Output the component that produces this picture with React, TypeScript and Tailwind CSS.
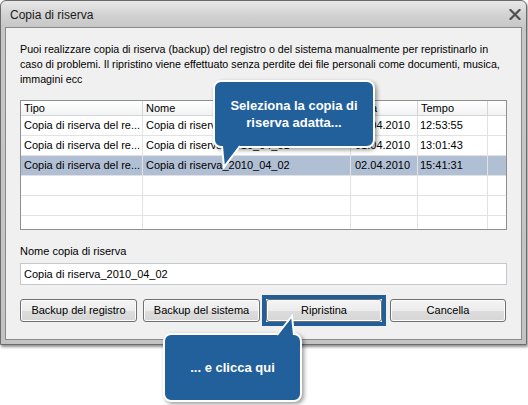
import React from "react";

const rows = [
  { tipo: "Copia di riserva del re...", nome: "Copia di riserva_2010_04_01", data: "01.04.2010", tempo: "12:53:55", sel: false },
  { tipo: "Copia di riserva del re...", nome: "Copia di riserva_2010_04_01", data: "01.04.2010", tempo: "13:01:43", sel: false },
  { tipo: "Copia di riserva del re...", nome: "Copia di riserva_2010_04_02", data: "02.04.2010", tempo: "15:41:31", sel: true },
  { tipo: "", nome: "", data: "", tempo: "", sel: false },
  { tipo: "", nome: "", data: "", tempo: "", sel: false },
  { tipo: "", nome: "", data: "", tempo: "", sel: false },
];

function Btn({ label, w }: { label: string; w: string }) {
  return (
    <div
      className={`${w} h-[23px] flex items-center justify-center rounded-[3px] border border-[#707070] bg-[linear-gradient(to_bottom,#f4f4f4_0%,#ececec_50%,#dddddd_51%,#d6d6d6_100%)] text-[11px] text-black shadow-[inset_0_0_0_1px_#fcfcfc]`}
    >
      {label}
    </div>
  );
}

export default function App() {
  return (
    <div className="relative w-[528px] h-[405px] bg-white overflow-hidden font-['Liberation_Sans',Arial,sans-serif] text-black">
      {/* Window */}
      <div className="w-[527px] h-[345px] flex flex-col rounded-t-[6px] border border-[#6b6b6b] bg-[linear-gradient(to_bottom,#e8e8e8_0px,#d2d2d2_14px,#c7c7c7_26px,#c3c3c3_100%)] shadow-[1px_2px_3px_rgba(0,0,0,0.45)]">
        {/* Title bar */}
        <div className="h-[26px] flex items-center justify-between pl-[9px] pr-[5px]">
          <span className="text-[12px] text-[#1b1b1b] pt-[2px]">Copia di riserva</span>
          <svg width="12" height="11" viewBox="0 0 12 11" className="mt-[1px]">
            <path d="M1.5 1 L10.5 10 M10.5 1 L1.5 10" stroke="#505050" strokeWidth="2.2" strokeLinecap="square" />
          </svg>
        </div>
        {/* Content panel */}
        <div className="mx-[4px] mb-[4px] flex-1 border border-[#8a8a8a] bg-[#f0f0f0] pl-[14px] pr-[13px] pt-[14px]">
          <p className="text-[10.7px] leading-[15px] whitespace-nowrap">
            Puoi realizzare copia di riserva (backup) del registro o del sistema manualmente per repristinarlo in
            <br />
            caso di problemi. Il ripristino viene effettuato senza perdite dei file personali come documenti, musica,
            <br />
            immagini ecc
          </p>

          {/* Table */}
          <div className="mt-[13px] w-[487px] h-[130px] border border-[#8e8f8f] bg-white overflow-hidden text-[11px]">
            <div className="flex h-[15px] border-b border-[#d5d5d5] bg-[linear-gradient(to_bottom,#ffffff,#f1f2f4)] leading-[15px]">
              <div className="w-[122px] border-r border-[#d5d5d5] pl-[3px]">Tipo</div>
              <div className="w-[208px] border-r border-[#d5d5d5] pl-[3px]">Nome</div>
              <div className="w-[67px] border-r border-[#d5d5d5] pl-[3px]">Data</div>
              <div className="w-[70px] border-r border-[#d5d5d5] pl-[3px]">Tempo</div>
              <div className="flex-1" />
            </div>
            {rows.map((r, i) => (
              <div
                key={i}
                className={`flex h-[20px] border-b border-[#e2e2e2] leading-[19px] ${r.sel ? "bg-[#b1bfd4]" : ""}`}
              >
                <div className="w-[122px] border-r border-[#e2e2e2] pl-[3px] whitespace-nowrap overflow-hidden">{r.tipo}</div>
                <div className="w-[208px] border-r border-[#e2e2e2] pl-[3px] whitespace-nowrap overflow-hidden">{r.nome}</div>
                <div className="w-[67px] border-r border-[#e2e2e2] pl-[4px] whitespace-nowrap overflow-hidden">{r.data}</div>
                <div className="w-[70px] border-r border-[#e2e2e2] pl-[2px] whitespace-nowrap overflow-hidden">{r.tempo}</div>
                <div className="flex-1" />
              </div>
            ))}
          </div>

          <div className="mt-[15px] text-[11px] leading-[13px]">Nome copia di riserva</div>
          <div className="mt-[5px] w-[487px] h-[22px] border border-[#c5c8cc] bg-white pl-[3px] text-[11px] leading-[20px]">
            Copia di riserva_2010_04_02
          </div>

          {/* Buttons */}
          <div className="mt-[10px] flex items-center">
            <Btn label="Backup del registro" w="w-[117px]" />
            <div className="ml-[6px]">
              <Btn label="Backup del sistema" w="w-[117px]" />
            </div>
            <div className="ml-[2px] border-4 border-[#225e97]">
              <Btn label="Ripristina" w="w-[116px]" />
            </div>
            <div className="ml-[4px]">
              <Btn label="Cancella" w="w-[116px]" />
            </div>
          </div>
        </div>
      </div>

      {/* Top callout */}
      <div className="absolute left-[213px] top-[80px] w-[162px] h-[68px] rounded-[8px] border-2 border-white bg-[#22609b] shadow-[2px_2px_4px_rgba(0,0,0,0.4)] flex items-center justify-center text-center text-white font-bold text-[13px] leading-[17px]">
        Seleziona la copia di
        <br />
        riserva adatta...
      </div>
      <svg className="absolute left-[215px] top-[140px]" width="30" height="30" viewBox="0 0 30 30">
        <polygon points="7,5 25,5 9,27" fill="#22609b" />
        <polyline points="7,6 9,27 25,6" fill="none" stroke="#ffffff" strokeWidth="2" strokeLinejoin="miter" />
      </svg>

      {/* Bottom callout */}
      <div className="absolute left-[163px] top-[333px] w-[139px] h-[69px] rounded-[8px] border-2 border-white bg-[#22609b] shadow-[2px_2px_4px_rgba(0,0,0,0.4)] flex items-center justify-center text-white font-bold text-[13px]">
        ... e clicca qui
      </div>
      <svg className="absolute left-[270px] top-[310px]" width="30" height="30" viewBox="0 0 30 30">
        <polygon points="7,26 24,26 22,6" fill="#22609b" />
        <polyline points="7,25 22,6 24,25" fill="none" stroke="#ffffff" strokeWidth="2" strokeLinejoin="miter" />
      </svg>
    </div>
  );
}
